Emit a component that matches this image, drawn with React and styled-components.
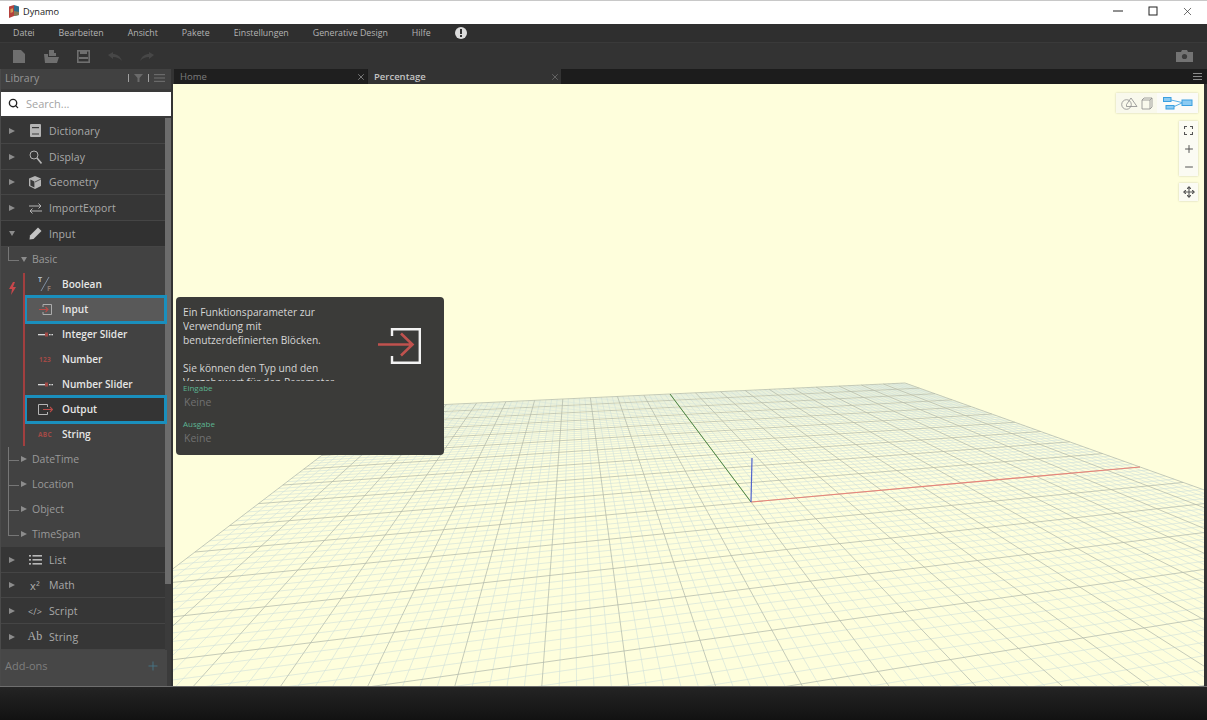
import React from "react";
import styled, { createGlobalStyle } from "styled-components";
import { Search, Move, Plus, Minus, X } from "lucide-react";

const GlobalStyle = createGlobalStyle`
  html, body {
    margin: 0;
    padding: 0;
    height: 100%;
    overflow: hidden;
    background: #1a1a1a;
    font-family: "Open Sans", "Noto Sans", sans-serif;
  }
  * {
    box-sizing: border-box;
  }
`;

/* window chrome */
const Page = styled.div`
  width: 1207px;
  height: 720px;
  display: flex;
  flex-direction: column;
  overflow: hidden;
`;

const TitleBar = styled.div`
  height: 24px;
  flex: none;
  display: flex;
  align-items: center;
  background: #fff;
  border-top: 1px solid #c8c8c8;
  padding: 0 2px 3px 9px;
  color: #222;
  font-size: 9.2px;
`;

const TitleText = styled.span`
  margin-left: 4px;
  flex: 1;
`;

const WindowButton = styled.div`
  width: 35px;
  display: flex;
  justify-content: center;
  color: #222;
`;

const MenuBar = styled.div`
  height: 19px;
  flex: none;
  display: flex;
  align-items: center;
  padding-left: 1px;
  background: #2f2f2f;
  border-bottom: 1px solid #3a3a3a;
`;

const MenuItem = styled.span`
  padding: 0 12px;
  font-size: 8.8px;
  color: #b4b4b4;
`;

const Toolbar = styled.div`
  height: 26px;
  flex: none;
  display: flex;
  align-items: center;
  padding-left: 3px;
  padding-right: 14px;
  background: #333;
`;

const ToolSlot = styled.div`
  width: 32px;
  display: flex;
  justify-content: center;
  margin-right: ${(p) => (p.$last ? "auto" : "0")};
`;

const Body = styled.div`
  flex: 1;
  display: flex;
  min-height: 0;
`;

const StatusBar = styled.div`
  height: 34px;
  flex: none;
  background: linear-gradient(#242424, #121212);
  border-top: 1px solid #6e6e6e;
  margin-top: -1px;
`;

/* library panel */
const Sidebar = styled.div`
  width: 171px;
  flex: none;
  display: flex;
  flex-direction: column;
  background: #3a3a3a;
  border-left: 1px solid #4a4a4a;
`;

const LibraryHeader = styled.div`
  height: 20px;
  flex: none;
  display: flex;
  align-items: center;
  padding: 0 6px 3px 4px;
  background: #414141;
  color: #969696;
  font-size: 10.5px;
`;

const LibraryTitle = styled.span`
  flex: 1;
`;

const HeaderDivider = styled.span`
  width: 1px;
  height: 8px;
  background: #a0a0a0;
  margin: 0 5px;
`;

const SearchBox = styled.div`
  height: 24px;
  flex: none;
  margin: 3px 0 2px;
  display: flex;
  align-items: center;
  gap: 7px;
  padding: 0 0 2px 7px;
  background: #fff;
  color: #a4a4a4;
  font-size: 11px;
`;

const ListArea = styled.div`
  flex: 1;
  display: flex;
  min-height: 0;
  background: #3b3b3b;
`;

const List = styled.div`
  flex: 1;
  min-width: 0;
`;

const ScrollTrack = styled.div`
  width: 6px;
  flex: none;
`;

const ScrollThumb = styled.div`
  height: 466px;
  background: #6c6c6c;
`;

const CategoryRow = styled.div`
  height: 25.75px;
  display: grid;
  grid-template-columns: 18px 22px 1fr;
  align-items: center;
  padding: 1px 0 0 8px;
  background: ${(p) => (p.$open ? "#313131" : "#363636")};
  border-bottom: 1px solid #454545;
  color: #a9a9a9;
  font-size: 10.5px;
  letter-spacing: 0.1px;
`;

const Arrow = styled.span`
  width: 0;
  height: 0;
  border-style: solid;
  border-color: transparent;
  ${(p) =>
    p.$open
      ? "border-width: 5px 3.5px 0 3.5px; border-top-color: #8c8c8c;"
      : "border-width: 3.5px 0 3.5px 6px; border-left-color: #8c8c8c;"}
`;

const IconSlot = styled.span`
  width: 16px;
  height: 16px;
  display: flex;
  align-items: center;
  justify-content: center;
  color: #b0b0b0;
`;

const GlyphIcon = styled.span`
  font-family: ${(p) => (p.$serif ? '"Liberation Serif", serif' : '"Open Sans", sans-serif')};
  font-size: ${(p) => p.$size || 11}px;
  color: #b0b0b0;
  white-space: nowrap;
`;

const SubTree = styled.div`
  background: #424242;
`;

const SubRow = styled.div`
  position: relative;
  height: 25px;
  display: flex;
  align-items: center;
  gap: 5px;
  padding-left: 20px;
  color: #999;
  font-size: 10.5px;
  &::before {
    content: "";
    position: absolute;
    left: 7px;
    top: 0;
    width: 10px;
    height: 13px;
    border-left: 1px solid #767676;
    border-bottom: 1px solid #767676;
  }
  &::after {
    content: "";
    display: ${(p) => (p.$more ? "block" : "none")};
    position: absolute;
    left: 7px;
    top: 13px;
    bottom: 0;
    border-left: 1px solid #767676;
  }
`;

const ItemGroup = styled.div`
  display: flex;
`;

const GroupGutter = styled.div`
  width: 23px;
  flex: none;
  padding: 6px 0 0 8px;
`;

const Items = styled.div`
  flex: 1;
  min-width: 0;
  position: relative;
  &::before {
    content: "";
    position: absolute;
    left: -1px;
    top: 1px;
    bottom: 1px;
    width: 2px;
    background: #a23f3f;
    z-index: 2;
  }
`;

const ItemRow = styled.div`
  position: relative;
  z-index: 1;
  height: 25px;
  margin-left: 2px;
  display: grid;
  grid-template-columns: 9px 27px 1fr;
  align-items: center;
  color: #e6e6e6;
  font-size: 10.1px;
  font-weight: 600;
  background: ${(p) => (p.$fill ? p.$fill : "transparent")};
  outline: ${(p) => (p.$fill ? "3px solid #1a8fbd" : "none")};
  outline-offset: -1px;
`;

const ItemIcon = styled.span`
  grid-column: 2;
  display: flex;
  align-items: center;
  justify-content: center;
  width: 20px;
  height: 16px;
`;

const TinyLabel = styled.span`
  font-size: 6.5px;
  font-weight: 700;
  color: #a34a46;
  letter-spacing: 0.3px;
`;

const AddOns = styled.div`
  height: 36px;
  display: flex;
  align-items: center;
  justify-content: space-between;
  width: 166px;
  padding: 0 7px 4px 4px;
  background: #474747;
  color: #7e7e7e;
  font-size: 11px;
`;

/* tabs and canvas */
const Main = styled.div`
  flex: 1;
  min-width: 0;
  display: flex;
  flex-direction: column;
  background: #333;
`;

const TabBar = styled.div`
  height: 15px;
  flex: none;
  display: flex;
  align-items: center;
  gap: 1px;
  margin-left: 3px;
  padding-right: 5px;
  background: #1c1c1c;
`;

const Tab = styled.div`
  width: 193px;
  height: 15px;
  display: flex;
  align-items: center;
  justify-content: space-between;
  padding: 0 1px 0 6px;
  font-size: 9.5px;
  font-weight: ${(p) => (p.$active ? 600 : 400)};
  color: ${(p) => (p.$active ? "#c4c4c4" : "#7c7c7c")};
  background: ${(p) => (p.$active ? "#333" : "#1f1f1f")};
`;

const TabMenu = styled.div`
  margin-left: auto;
  display: flex;
  flex-direction: column;
  gap: 2px;
  width: 9px;
  & > span {
    height: 1px;
    background: #8a8a8a;
  }
`;

const CanvasFrame = styled.div`
  flex: 1;
  min-height: 0;
  display: flex;
  padding: 0 3px 1px 2px;
  background: #333;
`;

const Canvas = styled.div`
  position: relative;
  flex: 1;
  overflow: hidden;
  background: #fefedc;
`;

const GridSvg = styled.svg`
  display: block;
  width: 100%;
  height: 100%;
`;

const ViewToggle = styled.div`
  position: absolute;
  top: 9px;
  right: 6px;
  width: 82px;
  height: 20px;
  display: flex;
  background: #fdfdf4;
  box-shadow: 0 0 2px rgba(0, 0, 0, 0.2);
`;

const ToggleHalf = styled.div`
  flex: 1;
  display: flex;
  align-items: center;
  justify-content: center;
  background: ${(p) => (p.$active ? "#fbfbf8" : "#f9f9ec")};
`;

const ZoomPanel = styled.div`
  position: absolute;
  top: 37px;
  right: 6px;
  width: 19px;
  height: 55px;
  padding-top: 0.5px;
  display: grid;
  grid-template-rows: repeat(3, 18px);
  justify-items: center;
  align-items: center;
  background: #fbfbf3;
  box-shadow: 0 0 2px rgba(0, 0, 0, 0.2);
  color: #555;
`;

const PanButton = styled.div`
  position: absolute;
  top: 99px;
  right: 6px;
  width: 19px;
  height: 18px;
  display: flex;
  align-items: center;
  justify-content: center;
  background: #fbfbf3;
  box-shadow: 0 0 2px rgba(0, 0, 0, 0.2);
  color: #555;
`;

/* tooltip */
const Tooltip = styled.div`
  position: absolute;
  left: 3px;
  top: 213px;
  width: 268px;
  height: 158px;
  padding: 8px 7px 0;
  border-radius: 4px;
  background: #3b3b39;
  display: flex;
  flex-direction: column;
`;

const TooltipTop = styled.div`
  display: flex;
  height: 78px;
  flex: none;
`;

const Description = styled.div`
  width: 165px;
  height: 76px;
  overflow: hidden;
  color: #d6d6d6;
  font-size: 10.2px;
  line-height: 14px;
`;

const TooltipIcon = styled.div`
  margin: 23px 0 0 30px;
`;

const PortLabel = styled.div`
  margin-top: ${(p) => p.$gap || 0}px;
  color: #5cb592;
  font-size: 8px;
  line-height: 10px;
`;

const PortValue = styled.div`
  margin-left: 1px;
  margin-top: 1px;
  color: #717171;
  font-size: 10.5px;
  line-height: 16px;
`;

/* homography through the origin, the axis ends and the far corner of the grid */
const project = (() => {
  const [x0, y0, x1, y1, x2, y2, x3, y3] = [751, 502, 1140, 467, 905, 383, 670, 394];
  const dx1 = x1 - x2;
  const dy1 = y1 - y2;
  const dx2 = x3 - x2;
  const dy2 = y3 - y2;
  const sx = x0 - x1 + x2 - x3;
  const sy = y0 - y1 + y2 - y3;
  const den = dx1 * dy2 - dx2 * dy1;
  const g = (sx * dy2 - dx2 * sy) / den;
  const h = (dx1 * sy - sx * dy1) / den;
  const a = x1 - x0 + g * x1;
  const b = x3 - x0 + h * x3;
  const d = y1 - y0 + g * y1;
  const e = y3 - y0 + h * y3;
  const w = (u, v) => g * u + h * v + 1;
  return {
    w,
    point: (u, v) => [(a * u + b * v + x0) / w(u, v), (d * u + e * v + y0) / w(u, v)],
  };
})();

// clip behind-camera part, the near corner of the grid passes the eye
const gridLine = (u0, v0, u1, v1) => {
  const minW = 0.04;
  const w0 = project.w(u0, v0);
  const w1 = project.w(u1, v1);
  let a = [u0, v0];
  let b = [u1, v1];
  if (w0 < minW) {
    const t = (minW - w0) / (w1 - w0);
    a = [u0 + (u1 - u0) * t, v0 + (v1 - v0) * t];
  }
  if (w1 < minW) {
    const t = (minW - w0) / (w1 - w0);
    b = [u0 + (u1 - u0) * t, v0 + (v1 - v0) * t];
  }
  const [x1, y1] = project.point(a[0], a[1]);
  const [x2, y2] = project.point(b[0], b[1]);
  return { x1, y1, x2, y2 };
};

const gridLines = [];
for (let i = -50; i <= 50; i++) {
  const t = i / 50;
  const major = i % 5 === 0;
  gridLines.push({ ...gridLine(t, -1, t, 1), major, key: "u" + i });
  gridLines.push({ ...gridLine(-1, t, 1, t), major, key: "v" + i });
}

const GroundGrid = () => (
  <GridSvg viewBox="173 84 1031 602" preserveAspectRatio="none">
    {gridLines
      .filter((l) => !l.major)
      .map((l) => (
        <line key={l.key} x1={l.x1} y1={l.y1} x2={l.x2} y2={l.y2} stroke="#cfdfda" strokeWidth="0.6" />
      ))}
    {gridLines
      .filter((l) => l.major)
      .map((l) => (
        <line key={l.key} x1={l.x1} y1={l.y1} x2={l.x2} y2={l.y2} stroke="#b1baac" strokeWidth="0.75" />
      ))}
    <line x1="751" y1="502" x2="670" y2="394" stroke="#4f8a42" strokeWidth="1" />
    <line x1="751" y1="502" x2="1140" y2="467" stroke="#e8857a" strokeWidth="1.2" />
    <line x1="751" y1="502" x2="752" y2="458" stroke="#5264cc" strokeWidth="1.2" />
  </GridSvg>
);

const DynamoLogo = () => (
  <svg width="10" height="13" viewBox="0 0 10 13">
    <path d="M0 1.5 L5 0 V11 L0 13 Z" fill="#b5413c" />
    <path d="M5 0 L10 1.5 V10 L5 11 Z" fill="#2f6f8f" />
    <path d="M5 6 L10 7 V10 L5 11 Z" fill="#8a7a55" />
    <path d="M1.5 4 L4 3.2 V7 L1.5 8 Z" fill="#d9a05a" />
  </svg>
);

const NewIcon = () => (
  <svg width="12" height="13" viewBox="0 0 12 13" fill="#6f6f6f">
    <path d="M0 0 H8 L12 4 V13 H0 Z" />
  </svg>
);

const OpenIcon = () => (
  <svg width="15" height="13" viewBox="0 0 15 13" fill="#6f6f6f">
    <path d="M5 0 H10 V3 H12 V6 H5 Z" />
    <path d="M0 4 H4 V7 H15 L13 13 H1 Z" />
  </svg>
);

const SaveIcon = () => (
  <svg width="13" height="13" viewBox="0 0 13 13">
    <rect x="0.8" y="0.8" width="11.4" height="11.4" fill="none" stroke="#6f6f6f" strokeWidth="1.6" />
    <rect x="3" y="1" width="7" height="3" fill="#6f6f6f" />
    <rect x="2" y="7" width="9" height="2" fill="#6f6f6f" />
  </svg>
);

const UndoIcon = ({ flip }) => (
  <svg width="14" height="9" viewBox="0 0 14 9" style={flip ? { transform: "scaleX(-1)" } : undefined}>
    <path d="M0 3 L5 0 V2 C9 2 12 4 14 9 C11 6 9 5 5 5 V7 Z" fill="#474747" />
  </svg>
);

const CameraIcon = () => (
  <svg width="17" height="12" viewBox="0 0 17 12">
    <path d="M0 2 H5 L6 0 H11 L12 2 H17 V12 H0 Z" fill="#737373" />
    <circle cx="8.5" cy="6.5" r="2.6" fill="#3c3c3c" />
  </svg>
);

const FilterIcon = () => (
  <svg width="9" height="8" viewBox="0 0 9 8">
    <path d="M0 0 H9 L5.5 4 V8 H3.5 V4 Z" fill="#6a6a6a" />
  </svg>
);

const ListLines = () => (
  <svg width="11" height="8" viewBox="0 0 11 8" fill="#6a6a6a">
    <rect width="11" height="1.2" />
    <rect y="3.4" width="11" height="1.2" />
    <rect y="6.8" width="11" height="1.2" />
  </svg>
);

const BookIcon = () => (
  <svg width="11" height="13" viewBox="0 0 11 13">
    <path d="M1 0 H10 Q11 0 11 1 V12 Q11 13 10 13 H1 Q0 13 0 12 V1 Q0 0 1 0 Z" fill="#b4b4b4" />
    <rect x="2" y="3" width="7" height="1.2" fill="#3a3a3a" />
    <rect x="2" y="9.5" width="7" height="1" fill="#3a3a3a" />
  </svg>
);

const MagnifierIcon = () => (
  <svg width="13" height="14" viewBox="0 0 13 14" fill="none" stroke="#b4b4b4">
    <circle cx="5" cy="5" r="4" strokeWidth="1" />
    <path d="M8 8 L12.5 13.5" strokeWidth="1.6" />
  </svg>
);

const CubeIcon = () => (
  <svg width="12" height="13" viewBox="0 0 12 13">
    <path d="M6 0 L12 2.6 V10 L6 13 L0 10 V2.6 Z" fill="#b4b4b4" />
    <path d="M1.4 3.6 L5.4 5.4 V11.4 L1.4 9.4 Z" fill="#3a3a3a" />
    <path d="M6 6 L12 3" stroke="#3a3a3a" strokeWidth="0.8" />
  </svg>
);

const SwapIcon = () => (
  <svg width="13" height="11" viewBox="0 0 13 11" fill="none" stroke="#b4b4b4" strokeWidth="1">
    <path d="M0 3 H12 M9.5 0.5 L12 3 L9.5 5.5" />
    <path d="M13 8 H1 M3.5 5.5 L1 8 L3.5 10.5" />
  </svg>
);

const PencilIcon = () => (
  <svg width="13" height="13" viewBox="0 0 13 13">
    <path d="M9 0.5 L12.5 4 L4.5 12 L0.5 12.5 L1 8.5 Z" fill="#c4c4c4" />
  </svg>
);

const ListIcon = () => (
  <svg width="13" height="10" viewBox="0 0 13 10" fill="#b8b8b8">
    <rect width="2" height="1.6" />
    <rect x="3.5" width="9.5" height="1.6" />
    <rect y="4" width="2" height="1.6" />
    <rect x="3.5" y="4" width="9.5" height="1.6" />
    <rect y="8" width="2" height="1.6" />
    <rect x="3.5" y="8" width="9.5" height="1.6" />
  </svg>
);

const BoltIcon = () => (
  <svg width="7" height="13" viewBox="0 0 7 13">
    <path d="M4 0 L0 7 H3 L2 13 L7 5 H4 L6 0 Z" fill="#c8474b" />
  </svg>
);

const BooleanIcon = () => (
  <svg width="14" height="16" viewBox="0 0 14 16">
    <path d="M11 1 L3 15" stroke="#7f8fa3" strokeWidth="1" />
    <text x="0" y="6" fontSize="7" fontWeight="700" fill="#aeb8c4" fontFamily="Open Sans">T</text>
    <text x="9" y="15" fontSize="7" fontWeight="700" fill="#8f7a70" fontFamily="Open Sans">F</text>
  </svg>
);

const InputIcon = () => (
  <svg width="13" height="11" viewBox="0 0 13 11" fill="none">
    <path d="M4 3 V0.5 H12.5 V10.5 H4 V8" stroke="#b4b4b4" strokeWidth="0.9" />
    <path d="M0 5.5 H9 M6.5 3 L9 5.5 L6.5 8" stroke="#b84c48" strokeWidth="1.1" />
  </svg>
);

const OutputIcon = () => (
  <svg width="15" height="11" viewBox="0 0 15 11" fill="none">
    <path d="M9.5 3 V0.5 H0.5 V10.5 H9.5 V8" stroke="#c4c4c4" strokeWidth="0.9" />
    <path d="M5 5.5 H14.5 M12 3 L14.5 5.5 L12 8" stroke="#b84c48" strokeWidth="1.1" />
  </svg>
);

const SliderIcon = () => (
  <svg width="15" height="5" viewBox="0 0 15 5">
    <rect y="2" width="7" height="1.3" fill="#d8d8d8" />
    <rect x="7" y="0.5" width="3" height="4" fill="#a34a46" />
    <rect x="11" y="2" width="1.6" height="1.3" fill="#d8d8d8" />
    <rect x="13.4" y="2" width="1.6" height="1.3" fill="#d8d8d8" />
  </svg>
);

const TooltipArrowIcon = () => (
  <svg width="43" height="36" viewBox="0 0 43 36" fill="none">
    <path d="M14 8 V1.2 H41.8 V34.8 H14 V28" stroke="#f2f2f2" strokeWidth="2.4" />
    <path d="M0 16.5 H34 M23 5.5 L34.5 16.5 L23 27.5" stroke="#c0524e" strokeWidth="2.6" />
  </svg>
);

const GeometryViewIcon = () => (
  <svg width="32" height="13" viewBox="0 0 32 13" fill="none" stroke="#8c8c8c" strokeWidth="0.8">
    <circle cx="5.5" cy="7.5" r="4.8" />
    <path d="M5.5 7.5 L10 1 L16 9.5 H5.5 Z" />
    <path d="M21 3 H29 V12 H21 Z M21 3 L23 1 H31 V10 L29 12 M29 3 L31 1" />
  </svg>
);

const NodeViewIcon = () => (
  <svg width="30" height="13" viewBox="0 0 30 13">
    <path d="M8 3 L19 5.5 M10 10 L19 6" stroke="#45a6e4" strokeWidth="0.9" fill="none" />
    <rect x="0.5" y="0.5" width="7.5" height="4" fill="#8ccbf2" stroke="#3a9fe0" />
    <rect x="3" y="8.5" width="8" height="3.5" fill="#8ccbf2" stroke="#3a9fe0" />
    <rect x="19" y="3" width="10" height="5.5" fill="#8ccbf2" stroke="#3a9fe0" />
  </svg>
);

const FitIcon = () => (
  <svg width="9" height="9" viewBox="0 0 9 9" fill="none" stroke="#555" strokeWidth="1.1">
    <path d="M0.5 3 V0.5 H3 M6 0.5 H8.5 V3 M8.5 6 V8.5 H6 M3 8.5 H0.5 V6" />
  </svg>
);

const NoticeIcon = styled.svg`
  display: block;
`;

const categoriesTop = [
  { name: "Dictionary", icon: <BookIcon /> },
  { name: "Display", icon: <MagnifierIcon /> },
  { name: "Geometry", icon: <CubeIcon /> },
  { name: "ImportExport", icon: <SwapIcon /> },
];

const categoriesBottom = [
  { name: "List", icon: <ListIcon /> },
  { name: "Math", icon: <GlyphIcon $size={11}>x²</GlyphIcon> },
  { name: "Script", icon: <GlyphIcon $size={9}>&lt;/&gt;</GlyphIcon> },
  { name: "String", icon: <GlyphIcon $serif $size={12}>Ab</GlyphIcon> },
];

const basicItems = [
  { name: "Boolean", icon: <BooleanIcon /> },
  { name: "Input", icon: <InputIcon />, fill: "#595959" },
  { name: "Integer Slider", icon: <SliderIcon /> },
  { name: "Number", icon: <TinyLabel>123</TinyLabel> },
  { name: "Number Slider", icon: <SliderIcon /> },
  { name: "Output", icon: <OutputIcon />, fill: "#343434" },
  { name: "String", icon: <TinyLabel>ABC</TinyLabel> },
];

const menus = ["Datei", "Bearbeiten", "Ansicht", "Pakete", "Einstellungen", "Generative Design", "Hilfe"];

const Category = ({ name, icon, open }) => (
  <CategoryRow $open={open}>
    <Arrow $open={open} />
    <IconSlot>{icon}</IconSlot>
    <span>{name}</span>
  </CategoryRow>
);

const Branch = ({ name, open, more }) => (
  <SubRow $more={more}>
    <Arrow $open={open} />
    <span>{name}</span>
  </SubRow>
);

export default function App() {
  return (
    <Page>
      <GlobalStyle />
      <TitleBar>
        <DynamoLogo />
        <TitleText>Dynamo</TitleText>
        <WindowButton>
          <svg width="10" height="10" viewBox="0 0 10 10"><path d="M0 5 H10" stroke="#222" /></svg>
        </WindowButton>
        <WindowButton>
          <svg width="10" height="10" viewBox="0 0 10 10"><rect x="1" y="1" width="8" height="8" fill="none" stroke="#222" /></svg>
        </WindowButton>
        <WindowButton>
          <X size={13} strokeWidth={1.2} />
        </WindowButton>
      </TitleBar>
      <MenuBar>
        {menus.map((m) => (
          <MenuItem key={m}>{m}</MenuItem>
        ))}
        <MenuItem>
          <NoticeIcon width="12" height="12" viewBox="0 0 12 12">
            <circle cx="6" cy="6" r="6" fill="#dcdcdc" />
            <rect x="5" y="2" width="2" height="5" fill="#333" />
            <rect x="5" y="8" width="2" height="2" fill="#333" />
          </NoticeIcon>
        </MenuItem>
      </MenuBar>
      <Toolbar>
        <ToolSlot><NewIcon /></ToolSlot>
        <ToolSlot><OpenIcon /></ToolSlot>
        <ToolSlot><SaveIcon /></ToolSlot>
        <ToolSlot><UndoIcon /></ToolSlot>
        <ToolSlot $last><UndoIcon flip /></ToolSlot>
        <CameraIcon />
      </Toolbar>
      <Body>
        <Sidebar>
          <LibraryHeader>
            <LibraryTitle>Library</LibraryTitle>
            <HeaderDivider />
            <FilterIcon />
            <HeaderDivider />
            <ListLines />
          </LibraryHeader>
          <SearchBox>
            <Search size={11} color="#222" strokeWidth={3} />
            <span>Search...</span>
          </SearchBox>
          <ListArea>
            <List>
              {categoriesTop.map((c) => (
                <Category key={c.name} {...c} />
              ))}
              <Category name="Input" icon={<PencilIcon />} open />
              <SubTree>
                <Branch name="Basic" open />
                <ItemGroup>
                  <GroupGutter><BoltIcon /></GroupGutter>
                  <Items>
                    {basicItems.map((item) => (
                      <ItemRow key={item.name} $fill={item.fill}>
                        <ItemIcon>{item.icon}</ItemIcon>
                        <span>{item.name}</span>
                      </ItemRow>
                    ))}
                  </Items>
                </ItemGroup>
                <Branch name="DateTime" more />
                <Branch name="Location" more />
                <Branch name="Object" more />
                <Branch name="TimeSpan" />
              </SubTree>
              {categoriesBottom.map((c) => (
                <Category key={c.name} {...c} />
              ))}
              <AddOns>
                <span>Add-ons</span>
                <Plus size={14} color="#47788a" strokeWidth={1.5} />
              </AddOns>
            </List>
            <ScrollTrack>
              <ScrollThumb />
            </ScrollTrack>
          </ListArea>
        </Sidebar>
        <Main>
          <TabBar>
            <Tab>
              <span>Home</span>
              <X size={10} color="#8a8a8a" />
            </Tab>
            <Tab $active>
              <span>Percentage</span>
              <X size={10} color="#6e6e6e" />
            </Tab>
            <TabMenu>
              <span />
              <span />
              <span />
            </TabMenu>
          </TabBar>
          <CanvasFrame>
            <Canvas>
              <GroundGrid />
              <ViewToggle>
                <ToggleHalf><GeometryViewIcon /></ToggleHalf>
                <ToggleHalf $active><NodeViewIcon /></ToggleHalf>
              </ViewToggle>
              <ZoomPanel>
                <FitIcon />
                <Plus size={12} strokeWidth={2} />
                <Minus size={12} strokeWidth={2} />
              </ZoomPanel>
              <PanButton>
                <Move size={12} strokeWidth={2.2} />
              </PanButton>
              <Tooltip>
                <TooltipTop>
                  <Description>
                    Ein Funktionsparameter zur Verwendung mit benutzerdefinierten Blöcken.
                    <br />
                    <br />
                    Sie können den Typ und den Vorgabewert für den Parameter
                  </Description>
                  <TooltipIcon>
                    <TooltipArrowIcon />
                  </TooltipIcon>
                </TooltipTop>
                <PortLabel>Eingabe</PortLabel>
                <PortValue>Keine</PortValue>
                <PortLabel $gap={9}>Ausgabe</PortLabel>
                <PortValue>Keine</PortValue>
              </Tooltip>
            </Canvas>
          </CanvasFrame>
        </Main>
      </Body>
      <StatusBar />
    </Page>
  );
}
